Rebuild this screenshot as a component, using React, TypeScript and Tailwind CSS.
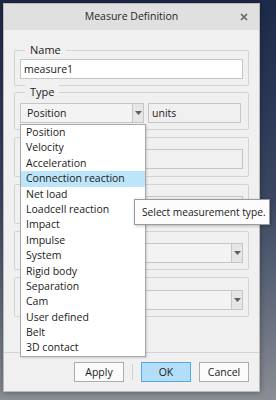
import React from 'react';

const types = [
  'Position',
  'Velocity',
  'Acceleration',
  'Connection reaction',
  'Net load',
  'Loadcell reaction',
  'Impact',
  'Impulse',
  'System',
  'Rigid body',
  'Separation',
  'Cam',
  'User defined',
  'Belt',
  '3D contact',
];

const Arrow: React.FC = () => (
  <svg width="7" height="4" viewBox="0 0 7 4">
    <path d="M0 0 L7 0 L3.5 4 Z" fill="#606060" />
  </svg>
);

const Group: React.FC<{ label?: string; className: string; children: React.ReactNode }> = ({
  label,
  className,
  children,
}) => (
  <div className={`relative border border-[#d3d3d3] rounded-[2px] px-[5px] ${className}`}>
    {label && (
      <span className="absolute left-[10px] -top-[9px] bg-[#f0f0f0] px-[5px] leading-[16px] text-[11px] text-[#1a1a1a]">
        {label}
      </span>
    )}
    {children}
  </div>
);

const SelectBox: React.FC<{ value?: string; className?: string }> = ({ value, className }) => (
  <div className={`h-[20px] flex border border-[#c6c6c6] bg-[#f3f3f3] ${className ?? ''}`}>
    <div className="flex-1 pl-[6px] leading-[18px] text-[10.5px] text-[#1a1a1a]">{value}</div>
    <div className="w-[11px] border-l border-[#c6c6c6] bg-[#e6e6e6] flex items-center justify-center">
      <Arrow />
    </div>
  </div>
);

const App: React.FC = () => {
  return (
    <div
      className="relative w-[276px] h-[400px] overflow-hidden bg-gradient-to-b from-[#1c2948] via-[#3b4762] to-[#8a8e94] pt-[3px] pl-[3px]"
      style={{ fontFamily: '"Open Sans", "Noto Sans", sans-serif' }}
    >
      <div className="w-[257px] h-[389px] flex flex-col bg-[#f0f0f0] border border-[#b9b9b9] shadow-[0_0_6px_rgba(0,0,0,0.35)]">
        {/* title bar */}
        <div className="h-[26px] shrink-0 bg-[#e0e0e0] flex items-center justify-center relative">
          <span className="text-[10.5px] text-[#262626]">Measure Definition</span>
          <svg className="absolute right-[11px] top-[9px]" width="8" height="8" viewBox="0 0 8 8">
            <path d="M1 1 L7 7 M7 1 L1 7" stroke="#666666" strokeWidth="1.7" />
          </svg>
        </div>

        {/* body */}
        <div className="flex-1 flex flex-col px-[10px] pt-[20px]">
          <Group label="Name" className="pt-[8px] pb-[6px]">
            <div className="h-[20px] border border-[#c6c6c6] bg-white pl-[3px] leading-[18px] text-[10.5px] text-[#1a1a1a]">
              measure1
            </div>
          </Group>

          <Group label="Type" className="mt-[6px] pt-[10px] pb-[6px]">
            <div className="flex gap-[4px] pr-[2px]">
              <SelectBox value="Position" className="w-[124px]" />
              <div className="flex-1 h-[20px] border border-[#c6c6c6] bg-[#f0f0f0] pl-[3px] leading-[18px] text-[10.5px] text-[#1a1a1a]">
                units
              </div>
            </div>
          </Group>

          <Group label=" " className="mt-[7px] pt-[11px] pb-[7px]">
            <div className="h-[20px] border border-[#c6c6c6] bg-[#f0f0f0]" />
          </Group>

          <Group label=" " className="mt-[7px] pt-[11px] pb-[7px]">
            <div className="h-[20px] border border-[#c6c6c6] bg-[#f0f0f0]" />
          </Group>

          <Group label=" " className="mt-[7px] pt-[11px] pb-[6px]">
            <SelectBox />
          </Group>

          <Group label=" " className="mt-[7px] pt-[12px] pb-[6px]">
            <SelectBox />
          </Group>
        </div>

        {/* footer */}
        <div className="h-[39px] shrink-0 border-t border-[#d4d4d4] flex items-center justify-end gap-[8px] pr-[10px] pb-[1px]">
          <button className="w-[50px] h-[20px] border border-[#adadad] bg-[#fbfbfb] text-[10.5px] text-[#1a1a1a] leading-[18px]">
            Apply
          </button>
          <div className="w-px h-[16px] bg-[#cfcfcf]" />
          <button className="w-[50px] h-[20px] border border-[#53a9e6] bg-[#b3defa] text-[10.5px] text-[#1a1a1a] leading-[18px]">
            OK
          </button>
          <button className="w-[50px] h-[20px] border border-[#adadad] bg-[#fbfbfb] text-[10.5px] text-[#1a1a1a] leading-[18px]">
            Cancel
          </button>
        </div>
      </div>

      {/* dropdown list */}
      <div className="absolute left-[20px] top-[124px] w-[126px] h-[233px] bg-white border border-[#a8a8a8] shadow-[1px_1px_2px_rgba(0,0,0,0.15)]">
        {types.map((t, i) => (
          <div
            key={t}
            className={`h-[15.4px] pl-[5px] text-[10.5px] leading-[15.4px] text-[#1a1a1a] whitespace-nowrap ${
              i === 3 ? 'bg-[#bde5fa]' : ''
            }`}
          >
            {t}
          </div>
        ))}
      </div>

      {/* tooltip */}
      <div className="absolute left-[134px] top-[199px] w-[136px] h-[26px] bg-[#fcfcfc] border border-[#9a9a9a] shadow-[1px_1px_3px_rgba(0,0,0,0.25)] pl-[7px] leading-[24px] text-[10.2px] text-[#1a1a1a] whitespace-nowrap">
        Select measurement type.
      </div>
    </div>
  );
};

export default App;
